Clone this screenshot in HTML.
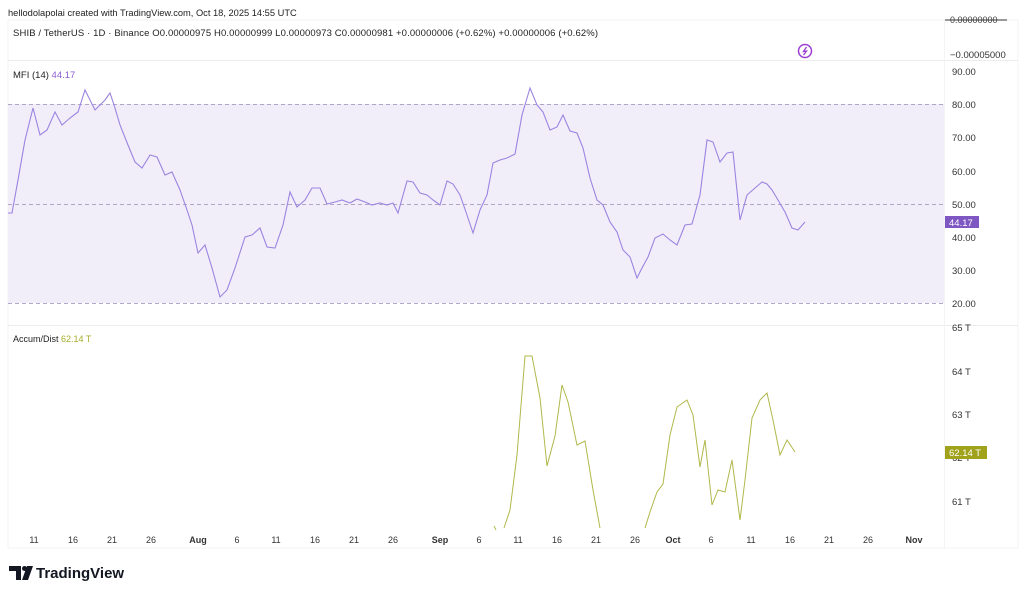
<!DOCTYPE html>
<html><head><meta charset="utf-8"><style>
html,body{margin:0;padding:0;background:#fff;width:1024px;height:594px;overflow:hidden;font-family:"Liberation Sans",sans-serif;}
svg text{font-family:"Liberation Sans",sans-serif;}
</style></head><body>
<svg width="1024" height="594" viewBox="0 0 1024 594" xmlns="http://www.w3.org/2000/svg">
<text x="8" y="16" font-size="9.3" fill="#222">hellodolapolai created with TradingView.com, Oct 18, 2025 14:55 UTC</text>
<rect x="8" y="20" width="1010" height="528" fill="none" stroke="#f3f3f6" stroke-width="1"/>
<line x1="8" y1="60.5" x2="1018" y2="60.5" stroke="#ebebf0"/>
<line x1="8" y1="325.5" x2="1018" y2="325.5" stroke="#ebebf0"/>
<line x1="944.5" y1="20" x2="944.5" y2="548" stroke="#f3f3f6"/>
<text x="13" y="36" font-size="9.5" fill="#222" textLength="585" lengthAdjust="spacing">SHIB / TetherUS · 1D · Binance  O0.00000975  H0.00000999  L0.00000973  C0.00000981  +0.00000006 (+0.62%)  +0.00000006 (+0.62%)</text>
<line x1="945" y1="20" x2="1007" y2="20" stroke="#333"/>
<text x="950" y="23" font-size="9" fill="#444">0.00000000</text>
<text x="950" y="58" font-size="9.5" fill="#333">−0.00005000</text>
<circle cx="805" cy="51" r="6.5" fill="none" stroke="#9c3fd0" stroke-width="1.5"/>
<path d="M806.5 47 L803.5 51.5 L806.5 51 L803.5 55" fill="none" stroke="#9c3fd0" stroke-width="1.3"/>
<rect x="8" y="104" width="936" height="199" fill="#f1eefa"/>
<g stroke="#9a8fb8" stroke-dasharray="4,3" stroke-width="0.8">
<line x1="8" y1="104.5" x2="944" y2="104.5"/>
<line x1="8" y1="204.5" x2="944" y2="204.5"/>
<line x1="8" y1="303.5" x2="944" y2="303.5"/>
</g>
<text x="13" y="78" font-size="9.5" fill="#222">MFI (14) <tspan fill="#8b5fd6">44.17</tspan></text>
<polyline fill="none" stroke="#9b84e0" stroke-width="1.1" points="8,213 12,213 18,180 25,140 33,108 40,135 47,130 55,112 62,125 70,118 78,112 85,90 90,100 95,110 100,105 105,100 110,93 115,108 120,125 128,145 135,162 142,168 150,155 157,157 165,175 172,172 180,190 187,210 192,225 198,253 205,245 212,268 220,297 227,290 235,268 245,237 252,235 260,228 267,247 275,248 283,225 290,192 297,207 305,200 312,188 320,188 327,204 335,202 342,200 350,203 357,199 365,202 372,205 380,203 387,205 393,203 398,213 407,181 413,182 420,193 427,195 433,200 440,205 447,181 453,184 460,195 467,215 473,233 480,210 487,195 493,163 500,160 507,158 515,154 522,115 530,88 537,105 543,112 550,130 557,127 563,115 570,131 577,133 583,148 590,178 597,200 603,205 610,222 617,232 623,250 630,257 637,278 642,268 648,257 655,238 663,234 670,240 677,245 685,225 692,224 700,195 707,140 713,142 720,162 727,153 733,152 740,220 747,195 755,188 762,182 767,184 772,190 778,200 785,212 792,228 798,230 805,222"/>
<g font-size="9.5" fill="#333">
<text x="952" y="75">90.00</text><text x="952" y="108">80.00</text><text x="952" y="141">70.00</text><text x="952" y="175">60.00</text><text x="952" y="208">50.00</text><text x="952" y="241">40.00</text><text x="952" y="274">30.00</text><text x="952" y="307">20.00</text>
</g>
<rect x="945" y="216" width="34" height="12" fill="#7e57c2"/>
<text x="949" y="226" font-size="9.5" fill="#fff">44.17</text>
<text x="13" y="342" font-size="9" fill="#222">Accum/Dist <tspan fill="#a8ad2a">62.14 T</tspan></text>
<polyline fill="none" stroke="#b0b84a" stroke-width="1" points="494,526 496,530"/>
<polyline fill="none" stroke="#b0b84a" stroke-width="1" points="504,528 510,510 517,455 525,356 532,356 540,398 547,466 555,436 562,385 568,402 577,445 585,441 593,490 600,528"/>
<polyline fill="none" stroke="#b0b84a" stroke-width="1" points="645,528 650,512 657,492 663,484 670,435 677,407 687,400 693,415 700,467 705,440 712,505 718,490 725,492 732,460 740,520 745,480 752,418 760,400 767,393 773,420 780,455 787,440 795,452"/>
<g font-size="9.5" fill="#333">
<text x="952" y="331">65 T</text><text x="952" y="375">64 T</text><text x="952" y="418">63 T</text><text x="952" y="461">62 T</text><text x="952" y="505">61 T</text>
</g>
<rect x="945" y="446" width="42" height="13" fill="#9fa21a"/>
<text x="949" y="456" font-size="9.5" fill="#fff">62.14 T</text>
<g font-size="9" fill="#333" text-anchor="middle">
<text x="34" y="543">11</text><text x="73" y="543">16</text><text x="112" y="543">21</text><text x="151" y="543">26</text><text x="198" y="543" font-weight="bold">Aug</text><text x="237" y="543">6</text><text x="276" y="543">11</text><text x="315" y="543">16</text><text x="354" y="543">21</text><text x="393" y="543">26</text><text x="440" y="543" font-weight="bold">Sep</text><text x="479" y="543">6</text><text x="518" y="543">11</text><text x="557" y="543">16</text><text x="596" y="543">21</text><text x="635" y="543">26</text><text x="673" y="543" font-weight="bold">Oct</text><text x="711" y="543">6</text><text x="751" y="543">11</text><text x="790" y="543">16</text><text x="829" y="543">21</text><text x="868" y="543">26</text><text x="914" y="543" font-weight="bold">Nov</text>
</g>
<path d="M9 566 H21 V580 H16 V571 H9 Z" fill="#131722"/>
<circle cx="24.5" cy="568.5" r="2.5" fill="#131722"/>
<path d="M27 566 H33 L28 580 H22 Z" fill="#131722"/>
<text x="36" y="578" font-size="15" font-weight="bold" fill="#131722">TradingView</text>
</svg>
</body></html>
